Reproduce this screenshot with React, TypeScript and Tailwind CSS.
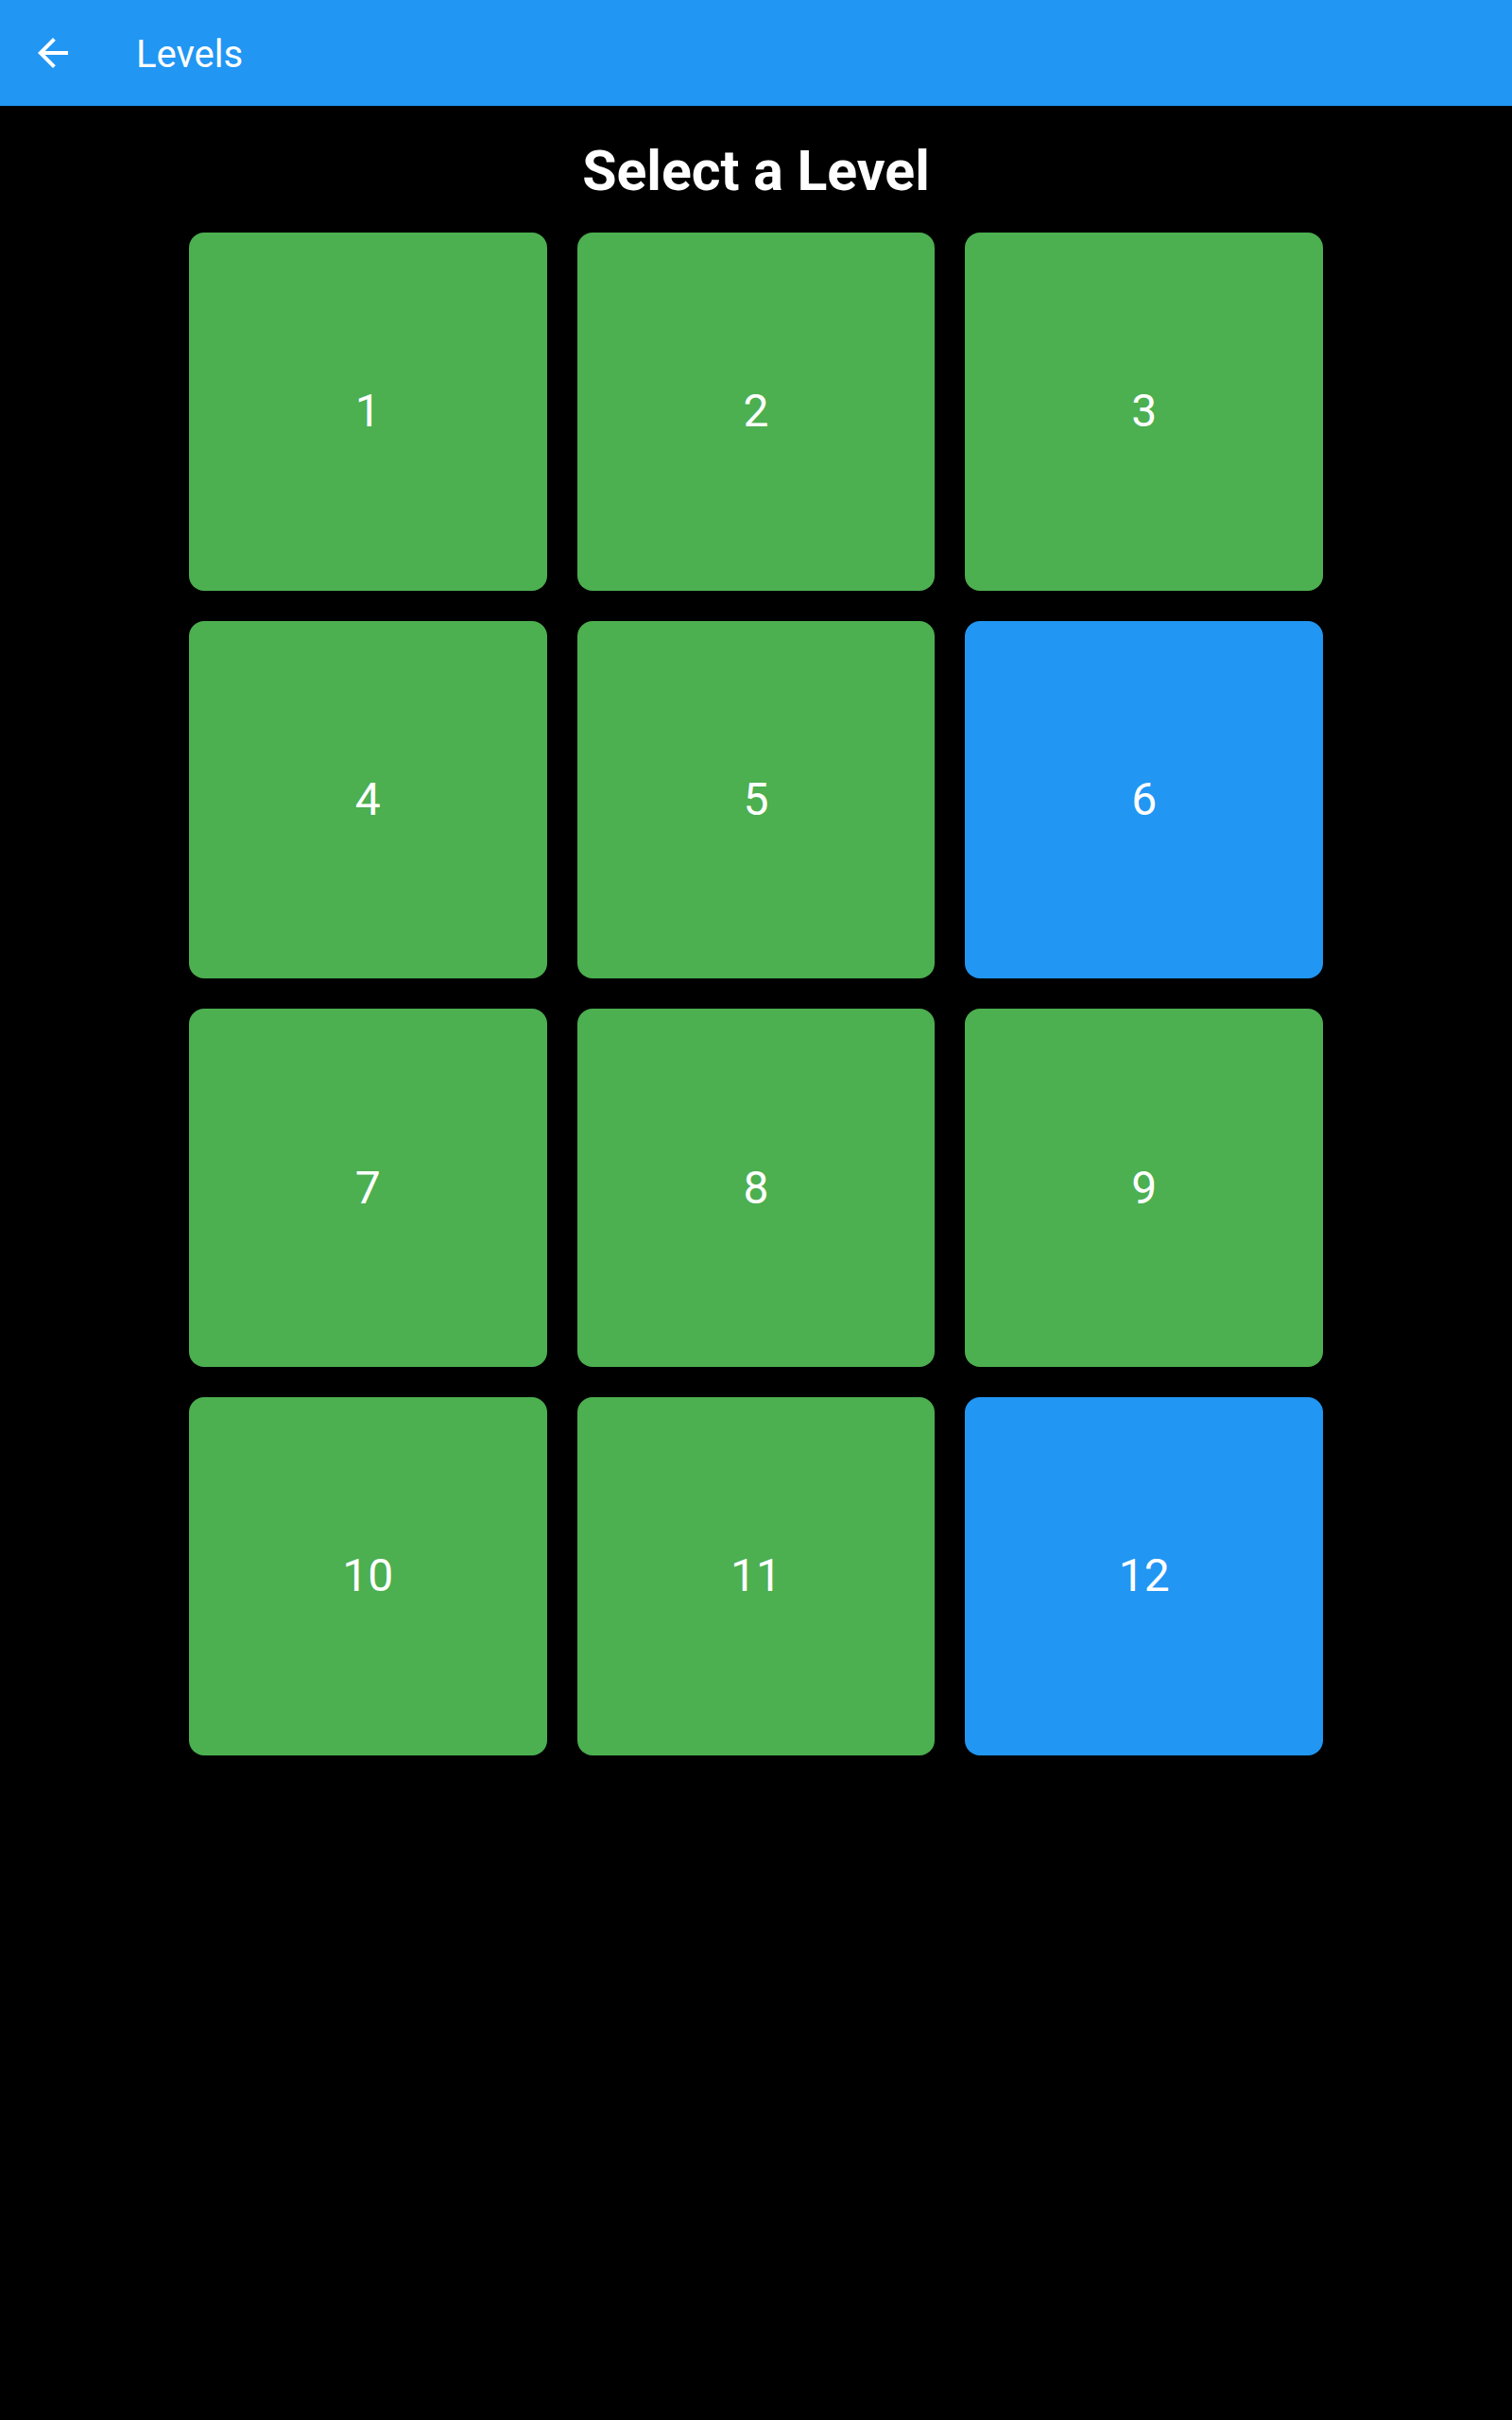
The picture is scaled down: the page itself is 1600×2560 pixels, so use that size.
import React from "react";

const levels = [
  { n: 1, current: false },
  { n: 2, current: false },
  { n: 3, current: false },
  { n: 4, current: false },
  { n: 5, current: false },
  { n: 6, current: true },
  { n: 7, current: false },
  { n: 8, current: false },
  { n: 9, current: false },
  { n: 10, current: false },
  { n: 11, current: false },
  { n: 12, current: true },
];

const BackArrow = () => (
  <svg width="48" height="48" viewBox="0 0 24 24" fill="white">
    <path d="M20 11H7.83l5.59-5.59L12 4l-8 8 8 8 1.41-1.41L7.83 13H20v-2z" />
  </svg>
);

const App = () => {
  return (
    <div className="min-h-[2560px] w-full bg-black font-['Roboto',sans-serif] text-white">
      <header className="flex h-[112px] w-full items-center bg-[#2196F3] pl-[32px]">
        <button className="flex h-[48px] w-[48px] items-center justify-center">
          <BackArrow />
        </button>
        <h1 className="ml-[64px] pt-[3px] text-[40px] leading-none font-normal">Levels</h1>
      </header>

      <main className="flex flex-col items-center pt-[34px]">
        <h2 className="text-[59px] leading-[70px] font-bold">Select a Level</h2>
        <div className="mt-[30px] grid w-[1200px] grid-cols-3 gap-[32px]">
          {levels.map((lvl) => (
            <button
              key={lvl.n}
              className={`flex aspect-square items-center justify-center rounded-2xl text-[48px] ${
                lvl.current ? "bg-[#2196F3]" : "bg-[#4CAF50]"
              }`}
            >
              {lvl.n}
            </button>
          ))}
        </div>
      </main>
    </div>
  );
};

export default App;
